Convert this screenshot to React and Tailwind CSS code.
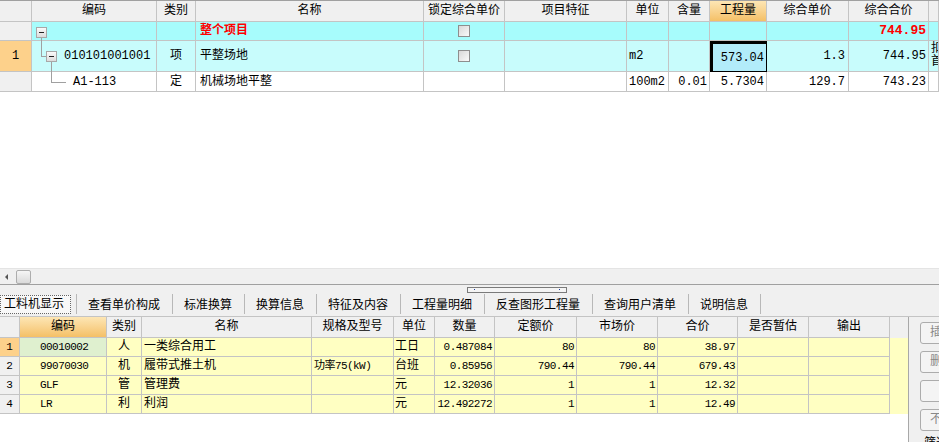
import React from 'react';

const FONT = { fontFamily: '"Liberation Mono", "Noto Sans CJK SC", monospace' };

// top grid column widths
const TW = ['w-[32px]', 'w-[125px]', 'w-[39px]', 'w-[228px]', 'w-[81px]', 'w-[122px]', 'w-[42px]', 'w-[41px]', 'w-[57px]', 'w-[82px]', 'w-[80px]', 'w-[10px]'];
// bottom grid column widths
const BW = ['w-[20px]', 'w-[87px]', 'w-[35px]', 'w-[170px]', 'w-[82px]', 'w-[41px]', 'w-[60px]', 'w-[82px]', 'w-[81px]', 'w-[80px]', 'w-[71px]', 'w-[81px]'];

const Cell = ({ w, className = '', children }) => (
    <div className={`${w} shrink-0 h-full border-r border-b border-[#c4c4c4] flex items-center overflow-hidden whitespace-nowrap relative ${className}`}>
        {children}
    </div>
);

const Check = () => (
    <span className="block w-[12px] h-[12px] border border-[#8e8e8e] bg-gradient-to-br from-[#d8d8d8] to-[#fafafa] mx-auto" />
);

const Box = () => (
    <span className="absolute w-[11px] h-[11px] border border-[#a8a8a8] bg-gradient-to-b from-[#fafafa] to-[#dcdcdc] flex items-center justify-center">
        <span className="block w-[5px] h-px bg-[#222]" />
    </span>
);

const topHead = ['', '编码', '类别', '名称', '锁定综合单价', '项目特征', '单位', '含量', '工程量', '综合单价', '综合合价', ''];
const botHead = ['', '编码', '类别', '名称', '规格及型号', '单位', '数量', '定额价', '市场价', '合价', '是否暂估', '输出'];

const botRows = [
    ['1', '00010002', '人', '一类综合用工', '', '工日', '0.487084', '80', '80', '38.97'],
    ['2', '99070030', '机', '履带式推土机', '功率75(kW)', '台班', '0.85956', '790.44', '790.44', '679.43'],
    ['3', 'GLF', '管', '管理费', '', '元', '12.32036', '1', '1', '12.32'],
    ['4', 'LR', '利', '利润', '', '元', '12.492272', '1', '1', '12.49'],
];

const tabs = ['查看单价构成', '标准换算', '换算信息', '特征及内容', '工程量明细', '反查图形工程量', '查询用户清单', '说明信息'];

const NUM = 'text-[11px] tracking-[-0.55px]';

export default function App() {
    return (
        <div className="w-[939px] h-[442px] overflow-hidden bg-white text-[12px] text-black flex flex-col" style={FONT}>
            {/* upper grid */}
            <div className="h-[268px] shrink-0 bg-white border-t border-[#a0a0a0]">
                <div className="flex h-[21px] bg-[#f0f0f0]">
                    {topHead.map((h, i) => (
                        <Cell key={i} w={TW[i]} className={`justify-center ${i === 8 ? 'bg-gradient-to-b from-[#fde6b4] to-[#f4c066]' : ''}`}>{h}</Cell>
                    ))}
                </div>

                {/* 整个项目 */}
                <div className="flex h-[19px] bg-[#a7fcfc]">
                    <Cell w={TW[0]} className="bg-[#f0f0f0]" />
                    <Cell w={TW[1]} className="!overflow-visible z-10">
                        <span className="absolute left-[4px] top-[5px]"><Box /></span>
                        <span className="absolute left-[9px] top-[16px] w-px h-[19px] bg-[#a0a0a0]" />
                    </Cell>
                    <Cell w={TW[2]} />
                    <Cell w={TW[3]} className="pl-[4px] text-[#ff0000] font-bold">整个项目</Cell>
                    <Cell w={TW[4]}><Check /></Cell>
                    <Cell w={TW[5]} />
                    <Cell w={TW[6]} />
                    <Cell w={TW[7]} />
                    <Cell w={TW[8]} />
                    <Cell w={TW[9]} />
                    <Cell w={TW[10]} className="justify-end pr-[2px] text-[#ff0000] font-bold text-[13px]">744.95</Cell>
                    <Cell w={TW[11]} />
                </div>

                {/* 平整场地 */}
                <div className="flex h-[31px] bg-[#c8fcfc]">
                    <Cell w={TW[0]} className="bg-[#fdd18b] justify-center">1</Cell>
                    <Cell w={TW[1]} className="!overflow-visible z-10">
                        <span className="absolute left-[9px] top-[15px] w-[6px] h-px bg-[#a0a0a0]" />
                        <span className="absolute left-[14px] top-[10px]"><Box /></span>
                        <span className="absolute left-[19px] top-[21px] w-px h-[20px] bg-[#a0a0a0]" />
                        <span className="pl-[32px]">010101001001</span>
                    </Cell>
                    <Cell w={TW[2]} className="justify-center">项</Cell>
                    <Cell w={TW[3]} className="pl-[4px]">平整场地</Cell>
                    <Cell w={TW[4]}><Check /></Cell>
                    <Cell w={TW[5]} />
                    <Cell w={TW[6]} className="pl-[2px]">m2</Cell>
                    <Cell w={TW[7]} />
                    <Cell w={TW[8]} className="justify-end pr-[2px] bg-[#b2ecfa] border-[3px] border-black">573.04</Cell>
                    <Cell w={TW[9]} className="justify-end pr-[3px]">1.3</Cell>
                    <Cell w={TW[10]} className="justify-end pr-[2px]">744.95</Cell>
                    <Cell w={TW[11]} className="flex-col !items-start justify-center leading-[13px] pl-[2px]">
                        <span>扣</span>
                        <span>首</span>
                    </Cell>
                </div>

                {/* A1-113 */}
                <div className="flex h-[20px] bg-white">
                    <Cell w={TW[0]} className="bg-[#f0f0f0]" />
                    <Cell w={TW[1]}>
                        <span className="absolute left-[19px] top-0 w-px h-[10px] bg-[#a0a0a0]" />
                        <span className="absolute left-[19px] top-[10px] w-[15px] h-px bg-[#a0a0a0]" />
                        <span className="pl-[41px]">A1-113</span>
                    </Cell>
                    <Cell w={TW[2]} className="justify-center">定</Cell>
                    <Cell w={TW[3]} className="pl-[4px]">机械场地平整</Cell>
                    <Cell w={TW[4]} />
                    <Cell w={TW[5]} />
                    <Cell w={TW[6]} className="pl-[2px]">100m2</Cell>
                    <Cell w={TW[7]} className="justify-end pr-[2px]">0.01</Cell>
                    <Cell w={TW[8]} className="justify-end pr-[2px]">5.7304</Cell>
                    <Cell w={TW[9]} className="justify-end pr-[3px]">129.7</Cell>
                    <Cell w={TW[10]} className="justify-end pr-[2px]">743.23</Cell>
                    <Cell w={TW[11]} />
                </div>
            </div>

            {/* horizontal scrollbar */}
            <div className="h-[16px] shrink-0 bg-[#f0f0f0] border-t border-[#e4e4e4] flex items-center">
                <span className="ml-[5px] w-0 h-0 border-y-[3px] border-y-transparent border-r-[3px] border-r-[#555]" />
                <span className="ml-[8px] w-[15px] h-[14px] rounded-[2px] border border-[#adadad] bg-gradient-to-b from-[#f6f6f6] to-[#dadada]" />
            </div>

            {/* tab strip */}
            <div className="h-[32px] shrink-0 bg-[#f0f0f0] border-t border-[#a0a0a0] flex items-end pb-[2px] relative">
                <span className="absolute left-[467px] top-[2px] w-[100px] h-[6px] border border-[#7a7a7a] bg-[#f4f4f4]">
                    <span className="absolute left-[6px] top-[1px] w-px h-px bg-[#2040a0]" />
                    <span className="absolute right-[6px] top-[1px] w-px h-px bg-[#2040a0]" />
                </span>
                <div className="flex items-center h-[20px]">
                    <span className="w-[71px] h-[19px] pl-[3px] pt-[2px] flex items-center border border-dotted border-[#666] bg-[#f8f8f8]">工料机显示</span>
                    <span className="ml-[5px] w-px h-[20px] bg-[#b8b8b8]" />
                </div>
                {tabs.map((t) => (
                    <div key={t} className="flex items-center h-[20px]">
                        <span className="pl-[11px] pr-[12px] pt-[3px]">{t}</span>
                        <span className="w-px h-[20px] bg-[#b8b8b8]" />
                    </div>
                ))}
            </div>

            {/* lower area */}
            <div className="flex-1 flex bg-[#f0f0f0] border-t border-[#c4c4c4]">
                <div className="w-[909px] shrink-0 bg-white border-r border-[#a8a8a8]">
                    <div className="flex h-[21px] bg-[#f0f0f0]">
                        {botHead.map((h, i) => (
                            <Cell key={i} w={BW[i]} className={`justify-center ${i === 1 ? 'bg-gradient-to-b from-[#fde6b4] to-[#f4c066]' : ''}`}>{h}</Cell>
                        ))}
                    </div>
                    {botRows.map((r, ri) => (
                        <div key={ri} className="flex h-[19px] bg-[#ffffc2]">
                            <Cell w={BW[0]} className={`justify-center text-[11px] ${ri === 0 ? 'bg-[#fdd18b]' : 'bg-[#f0f0f0]'}`}>{r[0]}</Cell>
                            <Cell w={BW[1]} className={`pl-[20px] ${NUM} ${ri === 0 ? 'bg-[#dff0cf]' : ''}`}>{r[1]}</Cell>
                            <Cell w={BW[2]} className="justify-center">{r[2]}</Cell>
                            <Cell w={BW[3]} className="pl-[2px]">{r[3]}</Cell>
                            <Cell w={BW[4]} className={`pl-[2px] ${NUM}`}>{r[4]}</Cell>
                            <Cell w={BW[5]} className="pl-[1px]">{r[5]}</Cell>
                            <Cell w={BW[6]} className={`justify-end pr-[2px] ${NUM}`}>{r[6]}</Cell>
                            <Cell w={BW[7]} className={`justify-end pr-[2px] ${NUM}`}>{r[7]}</Cell>
                            <Cell w={BW[8]} className={`justify-end pr-[2px] ${NUM}`}>{r[8]}</Cell>
                            <Cell w={BW[9]} className={`justify-end pr-[2px] ${NUM}`}>{r[9]}</Cell>
                            <Cell w={BW[10]} />
                            <Cell w={BW[11]} />
                        </div>
                    ))}
                </div>

                {/* side buttons */}
                <div className="flex-1 flex flex-col pl-[11px] pt-[5px] gap-[7px] overflow-hidden">
                    {['插', '删', '', '不'].map((b, i) => (
                        <div key={i} className="h-[22px] w-[40px] shrink-0 rounded-[3px] border border-[#acacac] bg-[#f4f4f4] pl-[9px] flex items-center text-[#888]">{b}</div>
                    ))}
                    <div className="pl-[4px] leading-[12px] whitespace-nowrap">筛选</div>
                </div>
            </div>
        </div>
    );
}
